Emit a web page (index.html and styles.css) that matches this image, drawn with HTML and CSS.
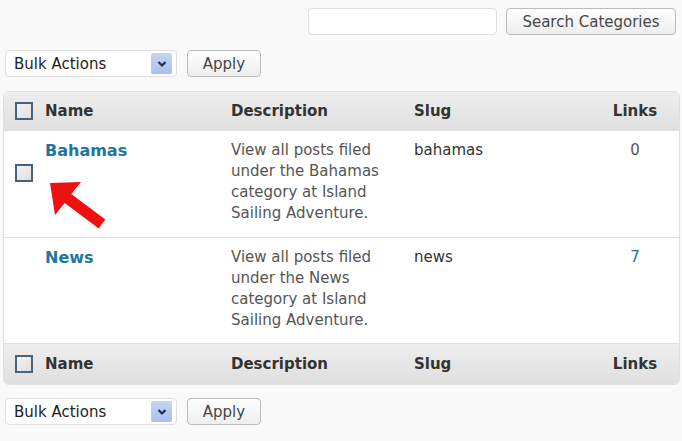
FILE: index.html
```html
<!DOCTYPE html>
<html>
<head>
<meta charset="utf-8">
<link rel="stylesheet" href="styles.css">
</head>
<body>
<div class="page">
  <div class="search-bar">
    <input class="search-input" type="text">
    <button class="btn btn-search">Search Categories</button>
  </div>
  <div class="actions">
    <div class="select"><span>Bulk Actions</span><span class="select-arrow"><svg width="10" height="8" viewBox="0 0 10 8"><path d="M1.5 2 L5 5.5 L8.5 2" fill="none" stroke="#1d2f57" stroke-width="2.2"/></svg></span></div>
    <button class="btn btn-apply">Apply</button>
  </div>
  <div class="table-wrap">
    <table class="cats">
      <thead>
        <tr>
          <th class="col-cb"><span class="cb"></span></th>
          <th class="col-name">Name</th>
          <th class="col-desc">Description</th>
          <th class="col-slug">Slug</th>
          <th class="col-links">Links</th>
        </tr>
      </thead>
      <tbody>
        <tr>
          <td class="col-cb"><span class="cb cb-row"></span></td>
          <td class="col-name"><a class="name-link">Bahamas</a></td>
          <td class="col-desc">View all posts filed under the Bahamas category at Island Sailing Adventure.</td>
          <td class="col-slug">bahamas</td>
          <td class="col-links">0</td>
        </tr>
        <tr>
          <td class="col-cb"></td>
          <td class="col-name"><a class="name-link">News</a></td>
          <td class="col-desc">View all posts filed under the News category at Island Sailing Adventure.</td>
          <td class="col-slug">news</td>
          <td class="col-links"><a class="count-link">7</a></td>
        </tr>
      </tbody>
      <tfoot>
        <tr>
          <th class="col-cb"><span class="cb"></span></th>
          <th class="col-name">Name</th>
          <th class="col-desc">Description</th>
          <th class="col-slug">Slug</th>
          <th class="col-links">Links</th>
        </tr>
      </tfoot>
    </table>
    <svg class="arrow" width="70" height="60" viewBox="0 0 70 60">
      <polygon points="3,3 34,2 24.3,14.1 58.3,39.6 51.7,48.4 17.7,22.9 8,35" fill="#ee1111"/>
    </svg>
  </div>
  <div class="actions actions-bottom">
    <div class="select"><span>Bulk Actions</span><span class="select-arrow"><svg width="10" height="8" viewBox="0 0 10 8"><path d="M1.5 2 L5 5.5 L8.5 2" fill="none" stroke="#1d2f57" stroke-width="2.2"/></svg></span></div>
    <button class="btn btn-apply">Apply</button>
  </div>
</div>
</body>
</html>
```
FILE: styles.css
```css
html, body {
  margin: 0;
  padding: 0;
  background: #f9f9f9;
}
body {
  font-family: "DejaVu Sans", Verdana, sans-serif;
  font-size: 15px;
  color: #333;
}
.page {
  width: 682px;
  height: 441px;
  overflow: hidden;
}
.search-bar {
  display: flex;
  justify-content: flex-end;
  gap: 9px;
  padding: 8px 6px 0 0;
  height: 27px;
}
.search-input {
  box-sizing: border-box;
  width: 189px;
  height: 27px;
  border: 1px solid #dfdfdf;
  border-radius: 4px;
  background: #fff;
  margin: 0;
}
.btn {
  box-sizing: border-box;
  height: 27px;
  border: 1px solid #bbb;
  border-radius: 4px;
  background: linear-gradient(#fefefe, #eeeeee);
  font-family: "DejaVu Sans", Verdana, sans-serif;
  font-size: 15px;
  color: #464646;
  padding: 0;
  margin: 0;
}
.btn-search {
  width: 170px;
}
.actions {
  display: flex;
  gap: 10px;
  padding: 15px 0 0 5px;
  height: 27px;
}
.select {
  box-sizing: border-box;
  width: 172px;
  height: 27px;
  border: 1px solid #dfdfdf;
  border-radius: 4px;
  background: #fff;
  display: flex;
  align-items: center;
  justify-content: space-between;
  padding: 0 4px 0 8px;
  color: #222;
}
.select-arrow {
  width: 21px;
  height: 21px;
  background: linear-gradient(#c5d5f3, #a9c0ec);
  border-radius: 2px;
  display: flex;
  align-items: center;
  justify-content: center;
}
.btn-apply {
  width: 74px;
}
.table-wrap {
  position: relative;
  margin: 14px 0 0 3px;
  width: 675px;
}
.cats {
  width: 675px;
  border-collapse: separate;
  border-spacing: 0;
  border: 1px solid #dfdfdf;
  border-radius: 6px;
  background: #fff;
  table-layout: fixed;
  overflow: hidden;
}
.cats th {
  height: 39px;
  box-sizing: border-box;
  background: linear-gradient(#eeeeee, #dfdfdf);
  font-weight: bold;
  text-align: left;
  color: #333;
  padding: 0;
  vertical-align: middle;
}
.cats thead th {
  border-bottom: 1px solid #dfdfdf;
}
.cats tfoot th {
  height: 41px;
  border-top: 1px solid #dfdfdf;
}
.cats td {
  vertical-align: top;
  padding: 9px 0 0 0;
  height: 106px;
  box-sizing: border-box;
  line-height: 21px;
}
.cats tbody tr + tr td {
  border-top: 1px solid #dfdfdf;
}
.col-cb { width: 41px; }
.col-name { width: 186px; }
.col-desc { width: 183px; }
.col-slug { width: 185px; }
.col-links { width: 80px; }
.cats th.col-cb, .cats td.col-cb {
  padding-left: 11px;
}
.cats td.col-desc {
  color: #555;
  padding-right: 14px;
}
.cats td.col-slug {
  color: #333;
}
.cats .col-links {
  text-align: center;
  padding-right: 8px;
}
.cats td.col-links {
  color: #555;
}
.cb {
  display: block;
  width: 18px;
  height: 18px;
  box-sizing: border-box;
  border: 2px solid #4b6079;
  background: linear-gradient(135deg, #f2f2f2, #e0e0e0);
}
.cb-row {
  margin-top: 24px;
}
.name-link {
  color: #21759b;
  font-weight: bold;
  font-size: 16px;
}
.count-link {
  color: #21759b;
}
.arrow {
  position: absolute;
  left: 44px;
  top: 89px;
}
.actions-bottom {
  padding-top: 13px;
}
```
